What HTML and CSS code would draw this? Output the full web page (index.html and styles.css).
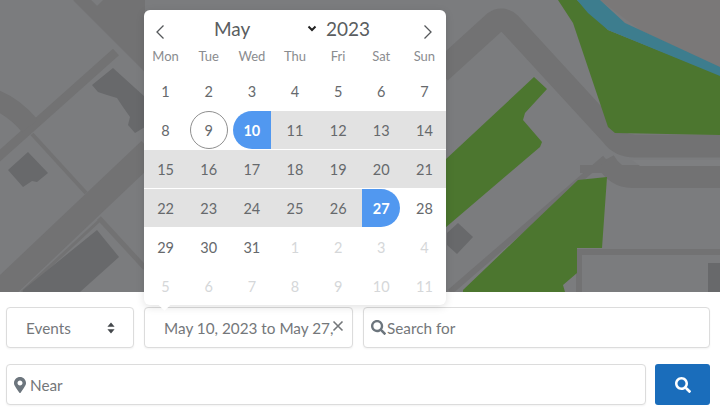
FILE: index.html
```html
<!DOCTYPE html>
<html lang="en">
<head>
<meta charset="utf-8">
<title>Events search</title>
<link rel="stylesheet" href="styles.css">
</head>
<body>
<section class="map">
  <svg class="map-art" viewBox="0 0 720 292" width="720" height="292" aria-hidden="true">
    <rect width="720" height="292" fill="#7b7c7e"/>
    <polygon points="103,0 145,0 145,58 95,8" fill="#727273"/>
    <polygon points="600,0 720,0 720,68 640,30" fill="#7a7878"/>
    <g fill="none" stroke="#727273" stroke-linecap="butt">
      <path d="M78 -4 L150 68" stroke-width="13"/>
      <path d="M-4 159 L116 52" stroke-width="9"/>
      <path d="M-4 100 Q15 108 30 126" stroke-width="20"/>
      <path d="M32 134 L86 193" stroke-width="4"/>
      <path d="M-4 296 L150 150" stroke-width="25"/>
      <path d="M99 218 L145 268" stroke-width="5"/>
      <path d="M22 292 L100 220" stroke-width="3"/>
      <path d="M440 72 L495 22 Q502 17 510 24 L612 135 Q620 146 635 146 L720 146" stroke-width="23"/>
      <path d="M605 160 Q615 178 632 178 L720 178" stroke-width="20"/>
      <path d="M450 292 L605 158" stroke-width="6"/>
      <path d="M580 169 L720 169" stroke-width="8"/>
      <path d="M579 292 L579 252 L720 252" stroke-width="6"/>
    </g>
    <polygon points="632,160 720,160 720,166 640,166" fill="#7e7f81"/>
    <g fill="#4c762f">
      <polygon points="558,0 577,0 602,23 608,30 720,75 720,135 615,133 608,127 573,23"/>
      <polygon points="445,160 534,77 547,89 525,113 523,120 542,142 540,147 445,228"/>
      <polygon points="463,290 578,180 607,177 602,248 577,248 577,273 563,285 565,292 463,292"/>
    </g>
    <polygon points="577,0 600,0 625,23 720,67 720,76 608,30 588,13" fill="#3d7d8e"/>
    <g fill="#68696b">
      <polygon points="92,85 113,68 145,97 145,127 135,133 128,125 130,117 123,107 117,98 107,95 98,92"/>
      <polygon points="8,170 28,152 48,173 37,182 32,181 23,187"/>
      <polygon points="23,290 97,230 119,257 80,292 23,292"/>
      <polygon points="447,233 458,223 473,237 457,254 447,245"/>
      <rect x="708" y="263" width="12" height="29"/>
    </g>
  </svg>
</section>

<form class="filters">
  <div class="row">
    <div class="field select-field">
      <span>Events</span>
      <svg class="sort" viewBox="0 0 8 12" width="8" height="12" aria-hidden="true"><path d="M4 0.5 7.6 4.8H.4zM4 11.5.4 7.2H7.6z"/></svg>
    </div>
    <div class="field date-field">
      <span class="date-text">May 10, 2023 to May 27, 2023</span>
      <svg class="clear" viewBox="0 0 12 12" width="12" height="12" aria-hidden="true"><path d="M1.5 1.5 10.5 10.5M10.5 1.5 1.5 10.5"/></svg>
    </div>
    <div class="field search-field">
      <svg class="icon" viewBox="0 0 512 512" width="15" height="15" aria-hidden="true"><path d="M505 442.7L405.3 343c-4.5-4.5-10.6-7-17-7H372c27.6-35.3 44-79.7 44-128C416 93.1 322.9 0 208 0S0 93.1 0 208s93.1 208 208 208c48.3 0 92.7-16.4 128-44v16.3c0 6.4 2.5 12.5 7 17l99.7 99.7c9.4 9.4 24.6 9.4 33.9 0l28.3-28.3c9.4-9.4 9.4-24.6.1-34zM208 336c-70.7 0-128-57.2-128-128 0-70.7 57.2-128 128-128 70.7 0 128 57.2 128 128 0 70.7-57.2 128-128 128z"/></svg>
      <span>Search for</span>
    </div>
  </div>
  <div class="row">
    <div class="field near-field">
      <svg class="icon" viewBox="0 0 384 512" width="12" height="16" aria-hidden="true"><path d="M172.268 501.67C26.97 291.031 0 255.79 0 192 0 85.961 85.961 0 192 0s192 85.961 192 192c0 63.79-26.97 99.031-172.268 309.67-9.535 13.774-29.93 13.773-39.464 0zM192 272c44.183 0 80-35.817 80-80s-35.817-80-80-80-80 35.817-80 80 35.817 80 80 80z"/></svg>
      <span>Near</span>
    </div>
    <button class="go" type="button" aria-label="Search">
      <svg viewBox="0 0 512 512" width="16" height="16" aria-hidden="true"><path d="M505 442.7L405.3 343c-4.5-4.5-10.6-7-17-7H372c27.6-35.3 44-79.7 44-128C416 93.1 322.9 0 208 0S0 93.1 0 208s93.1 208 208 208c48.3 0 92.7-16.4 128-44v16.3c0 6.4 2.5 12.5 7 17l99.7 99.7c9.4 9.4 24.6 9.4 33.9 0l28.3-28.3c9.4-9.4 9.4-24.6.1-34zM208 336c-70.7 0-128-57.2-128-128 0-70.7 57.2-128 128-128 70.7 0 128 57.2 128 128 0 70.7-57.2 128-128 128z"/></svg>
    </button>
  </div>
</form>

<div class="calendar">
  <div class="cal-head">
    <svg class="nav" viewBox="0 0 10 16" width="10" height="16" aria-hidden="true"><path d="M8.5 1.5 2 8l6.500 6.500"/></svg>
    <span class="month">May</span>
    <svg class="chev" viewBox="0 0 10 7" width="10" height="7" aria-hidden="true"><path d="M1.500 1.500 5 5 8.500 1.500"/></svg>
    <span class="year">2023</span>
    <svg class="nav" viewBox="0 0 10 16" width="10" height="16" aria-hidden="true"><path d="M1.500 1.500 8 8l-6.500 6.500"/></svg>
  </div>
  <div class="weekdays"><span>Mon</span><span>Tue</span><span>Wed</span><span>Thu</span><span>Fri</span><span>Sat</span><span>Sun</span></div>
  <div class="days">
    <span>1</span><span>2</span><span>3</span><span>4</span><span>5</span><span>6</span><span>7</span>
    <span>8</span><span class="today">9</span><span class="start">10</span><span class="mid">11</span><span class="mid">12</span><span class="mid">13</span><span class="mid">14</span>
    <span class="mid">15</span><span class="mid">16</span><span class="mid">17</span><span class="mid">18</span><span class="mid">19</span><span class="mid">20</span><span class="mid">21</span>
    <span class="mid">22</span><span class="mid">23</span><span class="mid">24</span><span class="mid">25</span><span class="mid">26</span><span class="end">27</span><span>28</span>
    <span>29</span><span>30</span><span>31</span><span class="off">1</span><span class="off">2</span><span class="off">3</span><span class="off">4</span>
    <span class="off">5</span><span class="off">6</span><span class="off">7</span><span class="off">8</span><span class="off">9</span><span class="off">10</span><span class="off">11</span>
  </div>
  <div class="tip"></div>
</div>
</body>
</html>
```
FILE: styles.css
```css
* { box-sizing: border-box; }
html, body { margin: 0; padding: 0; }
body {
  width: 720px;
  height: 412px;
  overflow: hidden;
  background: #fff;
  font-family: Lato, "Open Sans", sans-serif;
  color: #6c6f72;
  position: relative;
}
.map { height: 292px; overflow: hidden; }
.map-art { display: block; }

.filters {
  display: flex;
  flex-direction: column;
  gap: 16px;
  padding: 15px 10px 0 6px;
}
.row { display: flex; gap: 10px; }
.field {
  height: 41px;
  border: 1px solid #dcdcdc;
  border-radius: 4px;
  background: #fff;
  display: flex;
  align-items: center;
  font-size: 15.300px;
  color: #74777a;
  box-shadow: 0 1px 2px rgba(0,0,0,.05);
}
.select-field {
  width: 128px;
  padding: 0 18px 0 19px;
  justify-content: space-between;
}
.sort { fill: #44484c; }
.date-field {
  width: 209px;
  padding: 0 8px 0 19px;
}
.date-text {
  flex: 1;
  min-width: 0;
  overflow: hidden;
  white-space: nowrap;
}
.clear { fill: none; stroke: #74777a; stroke-width: 1.6; flex: none; margin: -3px 0 0 -2px; }
.search-field { flex: 1; padding-left: 7px; gap: 1px; }
.near-field { flex: 1; padding-left: 7px; gap: 4px; }
.icon { fill: #6c757d; flex: none; }
.go {
  width: 55px;
  height: 41px;
  margin-left: -1px;
  border: 0;
  border-radius: 3px;
  background: #1a6dbb;
  display: flex;
  align-items: center;
  justify-content: center;
  padding: 0;
}
.go svg { fill: #fff; }

.calendar {
  position: absolute;
  left: 144px;
  top: 10px;
  width: 302px;
  height: 295px;
  background: #fff;
  border-radius: 6px;
  box-shadow: 0 2px 8px rgba(0,0,0,.12);
}
.tip {
  position: absolute;
  left: 16px;
  bottom: -4px;
  width: 9px;
  height: 9px;
  background: #fff;
  transform: rotate(45deg);
}
.cal-head {
  height: 34px;
  display: flex;
  align-items: center;
  padding: 0 0 0 11px;
  color: #5a5d60;
}
.month { font-size: 19px; margin-left: 49px; width: 88px; margin-top: 3px; }
.year { font-size: 19px; margin-left: 9px; margin-top: 3px; }
.nav { fill: none; stroke: #55585b; stroke-width: 1.300; margin-top: 10px; }
.nav:last-child { margin-left: 53px; }
.chev { fill: none; stroke: #222; stroke-width: 2; margin-left: 5px; margin-top: 3px; }
.weekdays, .days {
  display: grid;
  grid-template-columns: repeat(7, 1fr);
  text-align: center;
}
.weekdays {
  height: 24px;
  font-size: 13px;
  color: #8a8c8f;
  line-height: 24px;
}
.days { margin-top: 4px; grid-auto-rows: 38px; row-gap: 1px; font-size: 14.500px; color: #66696c; }
.days span { display: flex; align-items: center; justify-content: center; }
.mid { background: #e2e2e2; }
.days .off { color: #d5d7d9; }
.today {
  width: 38px;
  height: 38px;
  border: 1px solid #8f8f8f;
  border-radius: 50%;
  justify-self: center;
}
.days .start, .days .end { color: #fff; font-weight: 700; }
.start {
  background: linear-gradient(to right, #5198f0 38px, #e2e2e2 38px);
  border-radius: 19px 0 0 19px;
  margin-left: 3px;
  padding-right: 3px;
}
.end {
  background: linear-gradient(to right, #e2e2e2 2.300px, #5198f0 2.300px);
  border-radius: 0 19px 19px 0;
  margin-right: 3px;
  padding-left: 3px;
}
```
